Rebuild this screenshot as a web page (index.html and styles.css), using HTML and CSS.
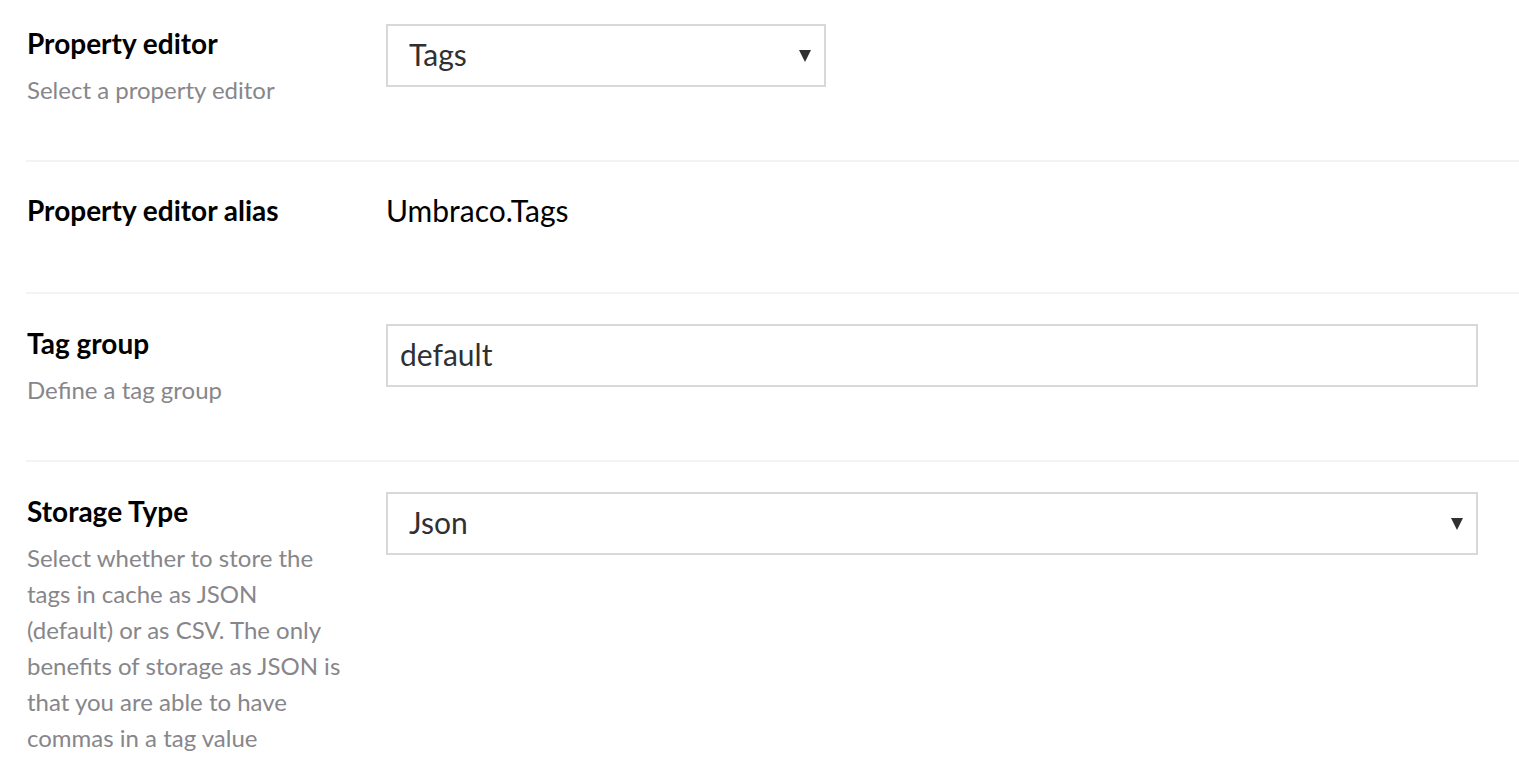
FILE: index.html
```html
<!DOCTYPE html>
<html lang="en">
<head>
<meta charset="utf-8">
<title>Property editor settings</title>
<link rel="stylesheet" href="styles.css">
</head>
<body>
<div class="form">
  <div class="row row-first">
    <div class="label-col">
      <div class="label">Property editor</div>
      <div class="desc">Select a property editor</div>
    </div>
    <div class="control-col">
      <div class="select select-short">
        <span class="select-text">Tags</span>
        <span class="arrow"></span>
      </div>
    </div>
  </div>
  <div class="row row-alias">
    <div class="label-col">
      <div class="label">Property editor alias</div>
    </div>
    <div class="control-col">
      <div class="value">Umbraco.Tags</div>
    </div>
  </div>
  <div class="row">
    <div class="label-col">
      <div class="label">Tag group</div>
      <div class="desc">Define a tag group</div>
    </div>
    <div class="control-col">
      <input class="input" type="text" value="default">
    </div>
  </div>
  <div class="row row-last">
    <div class="label-col">
      <div class="label">Storage Type</div>
      <div class="desc">Select whether to store the tags in cache as JSON (default) or as CSV. The only benefits of storage as JSON is that you are able to have commas in a tag value</div>
    </div>
    <div class="control-col">
      <div class="select">
        <span class="select-text">Json</span>
        <span class="arrow"></span>
      </div>
    </div>
  </div>
</div>
</body>
</html>
```
FILE: styles.css
```css
html, body {
  margin: 0;
  padding: 0;
  background: #ffffff;
}
body {
  font-family: Lato, "Open Sans", sans-serif;
  color: #000000;
}
.form {
  padding-left: 26px;
}
.row {
  display: grid;
  grid-template-columns: 322px 1fr;
  column-gap: 37px;
  padding: 30px 41px 52px 1px;
  border-bottom: 2px solid #f3f3f3;
}
.row-first {
  padding-top: 24px;
}
.row-last {
  border-bottom: none;
  padding-bottom: 20px;
}
.label {
  font-size: 28px;
  font-weight: 700;
  line-height: 36px;
  margin-top: 1px;
}
.desc {
  font-size: 24px;
  line-height: 36px;
  color: #87868a;
  margin-top: 11px;
}
.control-col {
  min-width: 0;
}
.select {
  box-sizing: border-box;
  height: 63px;
  border: 2px solid #d8d8d8;
  display: flex;
  align-items: center;
  justify-content: space-between;
  padding: 0 13px 0 21px;
  font-size: 30px;
  color: #303033;
  background: #fff;
}
.select-text {
  margin-bottom: 4px;
}
.select-short {
  width: 440px;
}
.arrow {
  width: 0;
  height: 0;
  border-left: 6px solid transparent;
  border-right: 6px solid transparent;
  border-top: 12px solid #303033;
}
.input {
  box-sizing: border-box;
  display: block;
  width: 100%;
  height: 63px;
  border: 2px solid #d8d8d8;
  padding: 0 12px 4px;
  font-family: Lato, "Open Sans", sans-serif;
  font-size: 30px;
  color: #303033;
  outline: none;
  margin: 0;
}
.value {
  font-size: 30px;
  line-height: 36px;
  color: #000;
  padding-bottom: 12px;
}
.row-alias .label {
  margin-top: 0;
}
```
